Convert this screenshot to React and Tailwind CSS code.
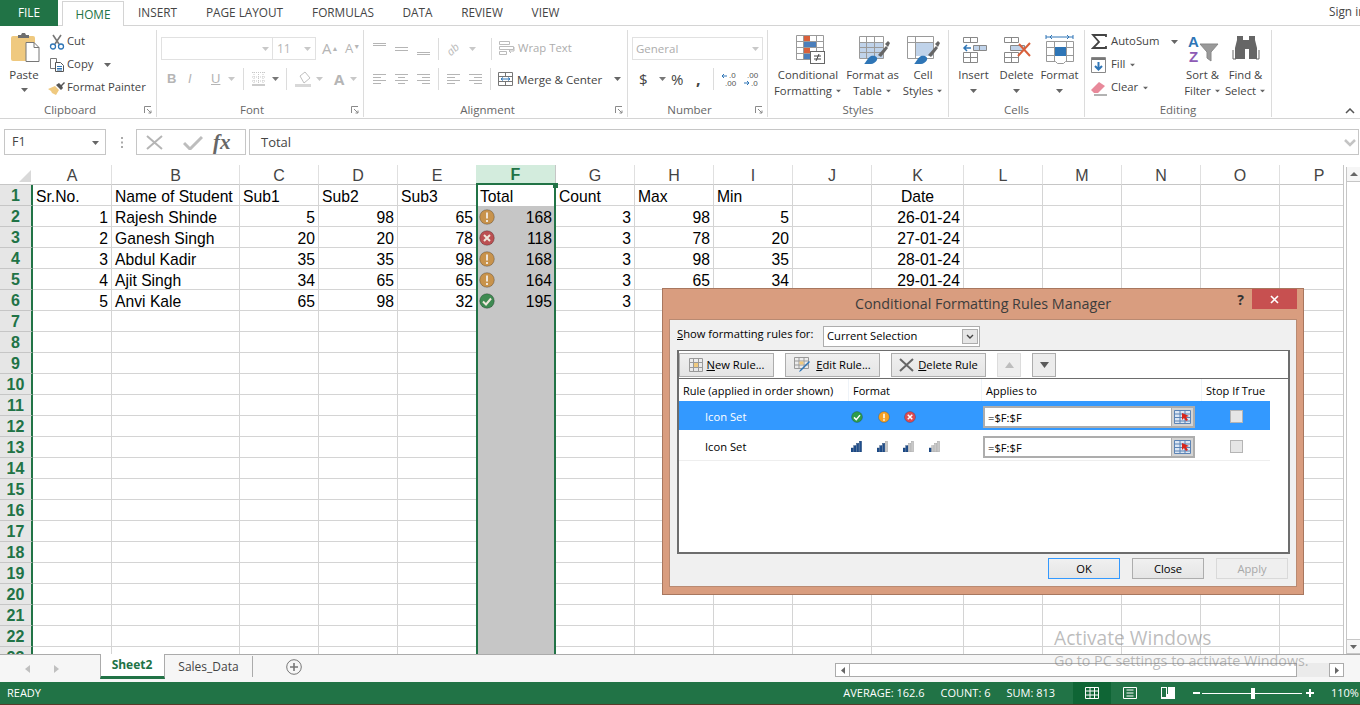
import React from 'react';

const UI = { fontFamily: '"Open Sans", "Noto Sans", sans-serif' };
const GRID = { fontFamily: '"Liberation Sans", Arial, sans-serif' };

const tabs = [
	['INSERT', 'w-[67px]'],
	['PAGE LAYOUT', 'w-[107px]'],
	['FORMULAS', 'w-[90px]'],
	['DATA', 'w-[59px]'],
	['REVIEW', 'w-[70px]'],
	['VIEW', 'w-[57px]'],
];

const columns = ['A', 'B', 'C', 'D', 'E', 'F', 'G', 'H', 'I', 'J', 'K', 'L', 'M', 'N', 'O', 'P'];

// the dialog sits on top of the last row's Max, Min and Date
const students = [
	[1, 'Rajesh Shinde', 5, 98, 65, 168, 'warn', 3, 98, 5, '26-01-24'],
	[2, 'Ganesh Singh', 20, 20, 78, 118, 'bad', 3, 78, 20, '27-01-24'],
	[3, 'Abdul Kadir', 35, 35, 98, 168, 'warn', 3, 98, 35, '28-01-24'],
	[4, 'Ajit Singh', 34, 65, 65, 164, 'warn', 3, 65, 34, '29-01-24'],
	[5, 'Anvi Kale', 65, 98, 32, 195, 'good', 3, '', '', ''],
];

const rowNumbers = Array.from({ length: 23 }, (_, i) => i + 1);

// small drop arrow used all over the ribbon
const Caret = ({ color = '#666', className = '' }) => (
	<svg width="7" height="4" viewBox="0 0 7 4" className={'shrink-0 ' + className}>
		<path d="M0 0h7L3.5 4z" fill={color} />
	</svg>
);

const Launcher = () => (
	<svg width="8" height="8" viewBox="0 0 8 8" className="shrink-0">
		<path d="M.5 7V.5H7M3 3l4 4M7 4.5V7H4.5" fill="none" stroke="#8a8a8a" strokeWidth="1" />
	</svg>
);

const PasteIcon = () => (
	<svg width="30" height="30" viewBox="0 0 30 30">
		<rect x="0" y="3" width="24" height="25" rx="2" fill="#efc97f" />
		<path d="M7 4V2h3l1-2h3l1 2h3v3H7z" fill="#6e6e6e" />
		<path d="M15.500 11.500h8l5 5v14h-13z" fill="#fff" stroke="#777" transform="translate(-0.500 -2)" />
		<path d="M23 9.500v5h5" fill="none" stroke="#777" />
	</svg>
);

const CutIcon = () => (
	<svg width="16" height="16" viewBox="0 0 16 16" fill="none">
		<path d="M4 1l6 9M12 1L6 10" stroke="#777" strokeWidth="1.600" />
		<circle cx="4" cy="12.500" r="2.500" stroke="#2e75b6" strokeWidth="1.300" />
		<circle cx="12" cy="12.500" r="2.500" stroke="#2e75b6" strokeWidth="1.300" />
	</svg>
);

const CopyIcon = () => (
	<svg width="16" height="16" viewBox="0 0 16 16" fill="none">
		<path d="M1.500 1.500h6v10h-6z" fill="#fff" stroke="#777" />
		<path d="M6.500 5.500h5l3 3v6h-8z" fill="#fff" stroke="#555" />
		<path d="M8 9.500h5M8 11.500h5M8 13h5" stroke="#2e75b6" />
	</svg>
);

const PainterIcon = () => (
	<svg width="17" height="16" viewBox="0 0 17 16">
		<path d="M0 9l7-3 4 4-3 5-2-1-2-1-1-2z" fill="#efc97f" />
		<path d="M8 5l3-2 2 2 3-3 1 1-3 3 1 2-2 2z" fill="#555" />
	</svg>
);

const BigIcon = ({ children, w = 34 }) => (
	<svg width={w} height="30" viewBox={`0 0 ${w} 30`} fill="none" className="shrink-0">
		{children}
	</svg>
);

const CondIcon = () => (
	<BigIcon>
		<path d="M5.500 1.500h27v24h-27zM5.500 7.500h27M5.500 13.500h27M5.500 19.500h27M12.500 1.500v24M18.500 1.500v24M25.500 1.500v24" stroke="#9a9a9a" />
		<rect x="13" y="2" width="6" height="5" fill="#d9603b" />
		<rect x="13" y="8" width="12" height="5" fill="#4a7ebb" />
		<rect x="13" y="14" width="6" height="5" fill="#d9603b" />
		<rect x="13" y="20" width="6" height="5" fill="#4a7ebb" />
		<rect x="19.500" y="17.500" width="14" height="12" fill="#fff" stroke="#666" />
		<path d="M23 22h7M23 25h7M28 20l-3 7" stroke="#444" />
	</BigIcon>
);

const TableIcon = () => (
	<BigIcon>
		<path d="M3.500 2.500h24v22h-24z" fill="#fff" stroke="#9a9a9a" />
		<rect x="4" y="8" width="23" height="16" fill="#c0d3ea" />
		<path d="M3.500 8.500h24M3.500 13.500h24M3.500 18.500h24M10.500 2.500v22M18.500 2.500v22" stroke="#9a9a9a" />
		<path d="M22 21l8-9 2 2-7 9z" fill="#666" />
		<path d="M29 10l3-3 2 2-2 4z" fill="#666" />
		<path d="M8 30c2-1 3-6 7-8 4-1 7 1 6 4-1 2-4 4-6 4z" fill="#2e75b6" />
	</BigIcon>
);

const StylesIcon = () => (
	<BigIcon>
		<path d="M1.500 2.500h26v22h-26z" fill="#fff" stroke="#9a9a9a" />
		<path d="M1.500 8.500h26M9.500 2.500v22" stroke="#9a9a9a" />
		<rect x="10" y="9" width="17" height="13" fill="#c0d3ea" />
		<path d="M22 21l8-9 2 2-7 9z" fill="#666" />
		<path d="M29 10l3-3 2 2-2 4z" fill="#666" />
		<path d="M8 30c2-1 3-6 7-8 4-1 7 1 6 4-1 2-4 4-6 4z" fill="#2e75b6" />
	</BigIcon>
);

const InsertIcon = () => (
	<BigIcon w={30}>
		<path d="M4.500 3.500h14v5h-14zM11.500 3.500v5M4.500 18.500h14v10h-14zM4.500 23.500h14M11.500 18.500v10" stroke="#888" />
		<path d="M14.500 11.500h13v5h-13z" fill="#c0d3ea" stroke="#888" />
		<path d="M20.500 11.500v5" stroke="#888" />
		<path d="M12 14H5M8 11l-3 3 3 3" stroke="#2e75b6" strokeWidth="1.500" />
	</BigIcon>
);

const DeleteIcon = () => (
	<BigIcon w={32}>
		<path d="M3.500 3.500h14v5h-14zM10.500 3.500v5M3.500 18.500h14v10h-14zM3.500 23.500h14M10.500 18.500v10" stroke="#888" />
		<path d="M9.500 11.500h14v5h-14z" fill="#c0d3ea" stroke="#888" />
		<path d="M18 10l11 12M29 9L17 22" stroke="#d9603b" strokeWidth="2" />
	</BigIcon>
);

const FormatIcon = () => (
	<BigIcon w={30}>
		<path d="M1 3h27M1 1v4M28 1v4" stroke="#2e75b6" />
		<path d="M5 3l2-2M5 3l2 2M24 3l-2-2M24 3l-2 2" stroke="#2e75b6" />
		<path d="M1.500 7.500h27v20h-8l-2 2h-6l-2-2h-9z" stroke="#999" fill="#fff" />
		<path d="M1.500 13.500h27M1.500 21.500h27M9.500 7.500v20M21.500 7.500v20" stroke="#999" />
		<rect x="10" y="13" width="11" height="9" fill="#2e75b6" />
	</BigIcon>
);

const SumIcon = () => (
	<svg width="16" height="16" viewBox="0 0 16 16" fill="none">
		<path d="M15 3V1H2l6 7-6 6h13v-2" stroke="#444" strokeWidth="1.800" />
	</svg>
);

const FillIcon = () => (
	<svg width="15" height="16" viewBox="0 0 15 16" fill="none">
		<path d="M.500 .500h14v15H.500z" fill="#fff" stroke="#888" />
		<rect x="1" y="1" width="13" height="2" fill="#777" />
		<path d="M7.500 5v7M4 9l3.500 3.500L11 9" stroke="#2e75b6" strokeWidth="2" />
	</svg>
);

const ClearIcon = () => (
	<svg width="16" height="16" viewBox="0 0 16 16">
		<path d="M0 10l8-8 6 4-7 7H3z" fill="#e8899a" />
		<path d="M3 15h13" stroke="#666" fill="none" />
	</svg>
);

const SortIcon = () => (
	<BigIcon w={32}>
		<text x="1" y="13" fontSize="15" fontWeight="700" fill="#2e75b6" fontFamily="Liberation Sans">A</text>
		<text x="2" y="28" fontSize="15" fontWeight="700" fill="#8e5bb5" fontFamily="Liberation Sans">Z</text>
		<path d="M13 10h18l-7 8v9l-4-3v-6z" fill="#999" stroke="#888" />
	</BigIcon>
);

const FindIcon = () => (
	<BigIcon w={28}>
		<path d="M5 2h6v4h6V2h6v4l2 8v11h-8V15h-4v10H3V14l2-8z" fill="#666" />
		<path d="M1 16v9h3M27 16v9h-3" stroke="#666" />
	</BigIcon>
);

const SmallBtn = ({ icon, label, caret, gap = 'gap-[2px]' }) => (
	<div className={'flex items-center h-[23px] ' + gap}>
		<span className="w-[17px] flex justify-center shrink-0">{icon}</span>
		<span className="text-[11.3px] text-[#444] whitespace-nowrap">{label}</span>
		{caret}
	</div>
);

const BigBtn = ({ icon, lines, width }) => (
	<div className={'flex flex-col items-center shrink-0 ' + width}>
		<div className="h-[37px] flex items-center justify-center">{icon}</div>
		<div className="text-[11.3px] leading-[16px] text-[#444] text-center whitespace-nowrap">
			<div>{lines[0]}</div>
			{lines[1] ? (
				<div className="flex items-center justify-center gap-[3px]">
					{lines[1]}
					<Caret className="scale-75" />
				</div>
			) : (
				<div className="flex justify-center pt-[6px]">
					<Caret />
				</div>
			)}
		</div>
	</div>
);

const Group = ({ width, label, launcher, children, className = '' }) => (
	<div className={'flex flex-col shrink-0 h-[87px] mt-[4px] border-r border-[#dcdcdc] ' + width}>
		<div className={'flex-1 flex min-h-0 ' + className}>{children}</div>
		<div className={'h-[15px] flex items-center relative justify-center text-[11.5px] text-[#666] ' + (launcher ? 'pr-[16px]' : '')}>
			{label}
			{launcher && (
				<span className="absolute right-[4px] top-[4px]">
					<Launcher />
				</span>
			)}
		</div>
	</div>
);

const Lines = ({ rows }) => (
	<svg width="15" height="14" viewBox="0 0 15 14" fill="none" className="shrink-0">
		{rows.map((r, i) => (
			<path key={i} d={`M${r[0]} ${r[1]}.500H${r[2]}`} stroke="#b5b5b5" />
		))}
	</svg>
);

const top = [[1, 1, 14], [1, 3, 14]];
const mid = [[1, 5, 14], [1, 8, 14]];
const bot = [[1, 10, 14], [1, 12, 14]];
const left = [[1, 2, 14], [1, 5, 9], [1, 8, 14], [1, 11, 9]];
const center = [[1, 2, 14], [4, 5, 11], [1, 8, 14], [4, 11, 11]];
const right = [[1, 2, 14], [6, 5, 14], [1, 8, 14], [6, 11, 14]];

const Divider = ({ className = '' }) => <span className={'w-px h-[22px] bg-[#dcdcdc] shrink-0 ' + className} />;

const Ribbon = () => (
	<div className="h-[93px] flex border-b border-[#d4d4d4] shrink-0 bg-white relative">
		<Group width="w-[157px]" label="Clipboard" launcher>
			<div className="w-[48px] flex flex-col items-center shrink-0">
				<div className="h-[33px] flex items-end pl-[3px]">
					<PasteIcon />
				</div>
				<span className="text-[11.5px] leading-[16px] text-[#444] mt-[4px]">Paste</span>
				<Caret className="mt-[5px]" />
			</div>
			<div className="flex flex-col">
				<SmallBtn icon={<CutIcon />} label="Cut" />
				<SmallBtn icon={<CopyIcon />} label="Copy" caret={<Caret className="ml-[9px]" />} />
				<SmallBtn icon={<PainterIcon />} label="Format Painter" />
			</div>
		</Group>

		<Group width="w-[207px]" label="Font" launcher className="flex-col pl-[4px] pt-[7px]">
			<div className="flex items-center h-[23px]">
				<div className="w-[112px] h-[23px] border border-[#e1e1e1] flex items-center justify-end pr-[3px]">
					<Caret color="#c8c8c8" />
				</div>
				<div className="w-[43px] h-[23px] border border-[#e1e1e1] border-l-0 flex items-center justify-between px-[4px] text-[12px] text-[#b5b5b5]">
					11
					<Caret color="#c8c8c8" />
				</div>
				<span className="ml-[6px] text-[15px] text-[#b5b5b5] w-[23px]">A<sup className="text-[7px]">▲</sup></span>
				<span className="text-[13px] text-[#b5b5b5]">A<sup className="text-[7px]">▼</sup></span>
			</div>
			<div className="flex items-center h-[22px] mt-[8px] pl-[6px] text-[#b5b5b5] text-[13px]">
				<span className="font-bold w-[21px]" style={GRID}>B</span>
				<span className="italic w-[23px]" style={GRID}>I</span>
				<span className="underline w-[17px]" style={GRID}>U</span>
				<Caret color="#c8c8c8" />
				<Divider className="ml-[8px]" />
				<svg width="15" height="14" viewBox="0 0 15 14" fill="none" className="ml-[7px]">
					<path d="M1 .500h13M1 5h13M1 9h13M3 0v12M7.500 0v12M12 0v12" stroke="#c8c8c8" strokeDasharray="1 1" />
					<path d="M1 13h13" stroke="#999" />
				</svg>
				<Caret className="ml-[6px]" color="#777" />
				<Divider className="ml-[7px]" />
				<svg width="16" height="16" viewBox="0 0 16 16" className="ml-[8px]">
					<path d="M5 5l5-4 5 6-6 5z" fill="none" stroke="#c0c0c0" />
					<rect y="13" width="16" height="3" fill="#d8d8d8" />
				</svg>
				<Caret className="ml-[5px]" color="#c8c8c8" />
				<span className="ml-[11px] text-[15px] font-bold">A</span>
				<Caret className="ml-[6px]" color="#c8c8c8" />
			</div>
		</Group>

		<Group width="w-[264px]" label="Alignment" launcher className="flex-col pl-[8px] pt-[7px]">
			<div className="flex items-center h-[23px] gap-[7px]">
				<Lines rows={top} />
				<Lines rows={mid} />
				<Lines rows={bot} />
				<Divider />
				<span className="text-[11px] text-[#bbb] -rotate-45 w-[16px] italic">ab</span>
				<Caret color="#c8c8c8" />
				<Divider className="ml-[8px]" />
				<span className="flex items-center gap-[3px] text-[11.3px] text-[#adadad] whitespace-nowrap">
					<svg width="16" height="15" viewBox="0 0 16 15" fill="none">
						<path d="M.500 .500h10v3H.500zM.500 5.500h14v3H.500zM.500 10.500h7v3H.500z" stroke="#bbb" />
						<path d="M15 6v4h-5M12 8l-2 2 2 2" stroke="#bbb" />
					</svg>
					Wrap Text
				</span>
			</div>
			<div className="flex items-center h-[22px] mt-[8px] gap-[7px]">
				<Lines rows={left} />
				<Lines rows={center} />
				<Lines rows={right} />
				<Divider />
				<Lines rows={left} />
				<Lines rows={right} />
				<Divider />
				<span className="flex items-center gap-[4px] pt-[1px] text-[11.6px] text-[#444] whitespace-nowrap">
					<svg width="15" height="14" viewBox="0 0 15 14" fill="none">
						<path d="M.500 .500h14v13H.500zM.500 4.500h14M.500 9.500h14M7.500 .500v4M7.500 9.500v4" stroke="#777" />
						<path d="M3 7h9M3 7l2-1.500M3 7l2 1.500M12 7l-2-1.500M12 7l-2 1.500" stroke="#2e75b6" />
					</svg>
					Merge &amp; Center
				</span>
				<Caret className="ml-[5px]" />
			</div>
		</Group>

		<Group width="w-[140px]" label="Number" launcher className="flex-col pl-[4px] pt-[7px]">
			<div className="w-[131px] h-[23px] border border-[#e1e1e1] flex items-center justify-between px-[3px] text-[11.5px] text-[#adadad]">
				General
				<Caret color="#c8c8c8" />
			</div>
			<div className="flex items-center h-[22px] mt-[8px] pl-[7px] text-[#444]">
				<span className="text-[15px] w-[17px]">$</span>
				<Caret color="#777" className="ml-[3px] mr-[5px]" />
				<span className="text-[15px] w-[21px]">%</span>
				<span className="text-[16px] font-bold ml-[4px] w-[10px] leading-[14px]">,</span>
				<Divider className="ml-[7px]" />
				<svg width="16" height="15" viewBox="0 0 16 15" className="ml-[7px]" fontFamily="Liberation Sans" fontSize="8">
					<path d="M1 4h5M3 2L1 4l2 2" fill="none" stroke="#2e75b6" />
					<text x="8" y="6" fill="#555">.0</text>
					<text x="4" y="14" fill="#555">.00</text>
				</svg>
				<svg width="16" height="15" viewBox="0 0 16 15" className="ml-[6px]" fontFamily="Liberation Sans" fontSize="8">
					<text x="4" y="6" fill="#555">.00</text>
					<path d="M1 11h5M4 9l2 2-2 2" fill="none" stroke="#2e75b6" />
					<text x="8" y="14" fill="#555">.0</text>
				</svg>
			</div>
		</Group>

		<Group width="w-[181px]" label="Styles" className="pl-[4px]">
			<BigBtn width="w-[72px]" icon={<CondIcon />} lines={['Conditional', 'Formatting']} />
			<BigBtn width="w-[57px]" icon={<TableIcon />} lines={['Format as', 'Table']} />
			<BigBtn width="w-[44px]" icon={<StylesIcon />} lines={['Cell', 'Styles']} />
		</Group>

		<Group width="w-[136px]" label="Cells" className="pl-[3px]">
			<BigBtn width="w-[43px]" icon={<InsertIcon />} lines={['Insert']} />
			<BigBtn width="w-[43px]" icon={<DeleteIcon />} lines={['Delete']} />
			<BigBtn width="w-[43px]" icon={<FormatIcon />} lines={['Format']} />
		</Group>

		<Group width="w-[187px]" label="Editing" className="pl-[5px]">
			<div className="w-[91px] shrink-0 flex flex-col">
				<SmallBtn icon={<SumIcon />} label="AutoSum" gap="gap-[4px]" caret={<Caret className="ml-[8px]" />} />
				<SmallBtn icon={<FillIcon />} label="Fill" gap="gap-[4px]" caret={<Caret className="scale-75" />} />
				<SmallBtn icon={<ClearIcon />} label="Clear" gap="gap-[4px]" caret={<Caret className="scale-75" />} />
			</div>
			<BigBtn width="w-[43px]" icon={<SortIcon />} lines={['Sort &', 'Filter']} />
			<BigBtn width="w-[43px]" icon={<FindIcon />} lines={['Find &', 'Select']} />
		</Group>

		<div className="flex-1 flex justify-end items-end pr-[5px] pb-[4px]">
			<svg width="10" height="6" viewBox="0 0 10 6" fill="none">
				<path d="M1 5l4-4 4 4" stroke="#555" strokeWidth="1.500" />
			</svg>
		</div>
	</div>
);

const FormulaBar = () => (
	<div className="h-[26px] mt-[10px] flex shrink-0 pl-[4px] pr-[1px]">
		<div className="w-[102px] border border-[#c6c6c6] flex items-center justify-between pl-[7px] pr-[6px] pt-[1px] text-[12.5px] text-[#444]">
			F1
			<Caret />
		</div>
		<div className="w-[30px] flex items-center justify-center">
			<svg width="3" height="11" viewBox="0 0 3 11">
				<path d="M1 0h2v2H1zM1 4.500h2v2H1zM1 9h2v2H1z" fill="#aaa" />
			</svg>
		</div>
		<div className="w-[110px] border border-[#c6c6c6] flex items-center pl-[9px]">
			<svg width="17" height="15" viewBox="0 0 17 15" fill="none">
				<path d="M1 1l15 13M16 1L1 14" stroke="#b5b5b5" strokeWidth="2" />
			</svg>
			<svg width="20" height="15" viewBox="0 0 20 15" fill="none" className="ml-[20px]">
				<path d="M1 8l6 6L19 2" stroke="#bdbdbd" strokeWidth="3" />
			</svg>
			<span className="ml-[10px] text-[21px] leading-none italic font-bold text-[#666]" style={{ fontFamily: '"Liberation Serif", serif' }}>fx</span>
		</div>
		<div className="flex-1 ml-[3px] border border-[#c6c6c6] flex items-center justify-between pl-[11px] pr-[2px] pt-[1px] text-[13px] text-[#444]">
			Total
			<svg width="12" height="8" viewBox="0 0 12 8" fill="none">
				<path d="M1 1l5 5 5-5" stroke="#c4c4c4" strokeWidth="2.500" />
			</svg>
		</div>
	</div>
);

const Dot = ({ kind, size = 16, muted }) => {
	const fill = {
		good: muted ? '#3f8a52' : '#2f9c4c',
		warn: muted ? '#c8934c' : '#f4a127',
		bad: muted ? '#bb5052' : '#dd4b52',
	}[kind];
	const mark = muted ? '#efe6da' : '#fff';
	return (
		<svg width={size} height={size} viewBox="0 0 16 16" fill="none" className="shrink-0">
			<circle cx="8" cy="8" r="7.300" fill={fill} stroke="#00000040" />
			{kind == 'good' && <path d="M4 8.500l3 3 5-6" stroke={mark} strokeWidth="2" />}
			{kind == 'warn' && <path d="M8 3.500v6M8 11v2" stroke={mark} strokeWidth="2" />}
			{kind == 'bad' && <path d="M5 5l6 6M11 5l-6 6" stroke={mark} strokeWidth="2" />}
		</svg>
	);
};

const Cell = ({ children, align = 'text-left' }) => (
	<div className={'border-r border-b border-[#d4d4d4] px-[3px] pt-[2px] text-[15.7px] leading-[20px] text-black whitespace-nowrap overflow-hidden ' + align}>
		{children}
	</div>
);

const rowValues = (n) => {
	if (n == 1) return ['Sr.No.', 'Name of Student', 'Sub1', 'Sub2', 'Sub3', null, 'Count', 'Max', 'Min', '', 'Date'];
	const s = students[n - 2];
	if (!s) return [];
	return [s[0], s[1], s[2], s[3], s[4], null, s[7], s[8], s[9], '', s[10]];
};

const SheetRow = ({ n }) => {
	const values = rowValues(n);
	const student = students[n - 2];
	return (
		<>
			<div className="bg-[#e6e6e6] border-r-2 border-r-[#217346] border-b border-b-[#c6c6c6] pt-[2px] flex items-center justify-center text-[16px] font-bold text-[#217346]">
				{n}
			</div>
			{columns.map((col, i) => {
				if (col == 'F') {
					return (
						<div
							key={col}
							className={
								'ml-[-1px] border-x-2 border-[#217346] text-[15.7px] leading-[20px] text-black relative flex items-center justify-between pl-[1px] pr-[2px] ' +
								(n == 1 ? 'bg-white pl-[2px] pt-[3px]' : 'bg-[#c6c6c6] border-b-0')
							}
						>
							{n == 1 && 'Total'}
							{student && <Dot kind={student[6]} muted />}
							{student && <span className="pt-[3px]">{student[5]}</span>}
							{n == 1 && <span className="absolute z-10 right-[-4px] top-[-2px] w-[5px] h-[5px] bg-[#217346]" />}
						</div>
					);
				}
				const v = values[i];
				const isNum = typeof v == 'number' || (col == 'K' && n > 1);
				const align = isNum ? 'text-right' : col == 'K' ? 'text-center' : 'text-left';
				return (
					<Cell key={col} align={align}>
						{v}
					</Cell>
				);
			})}
		</>
	);
};

const Sheet = () => (
	<div className="flex-1 min-h-0 flex mt-[10px] overflow-hidden" style={GRID}>
		<div className="w-[1344px] shrink-0 border-r border-[#c6c6c6] overflow-hidden">
			<div className="grid grid-cols-[33px_79px_128px_79px_79px_79px_79px_79px_79px_79px_79px_92px_79px_79px_79px_79px_79px] grid-rows-[20px_repeat(23,21px)] w-[1359px]">
				<div className="border-b border-[#c6c6c6] relative overflow-hidden">
					<span className="absolute right-[2px] bottom-[2px] w-0 h-0 border-l-[12px] border-l-transparent border-b-[12px] border-b-[#d9d9d9]" />
				</div>
				{columns.map((col) =>
					col == 'F' ? (
						<div key={col} className="ml-[-1px] pt-[2px] bg-[#d3ecdd] border-r border-[#c6c6c6] border-b-2 border-b-[#217346] flex items-center justify-center text-[16px] font-bold text-[#217346]">
							{col}
						</div>
					) : (
						<div key={col} className="pt-[2px] border-r border-[#e0e0e0] border-b border-b-[#c6c6c6] flex items-center justify-center text-[16px] text-[#444]">
							{col}
						</div>
					)
				)}
				{rowNumbers.map((n) => (
					<SheetRow key={n} n={n} />
				))}
			</div>
		</div>
		<div className="flex-1 ml-[2px] mt-[2px] border-l border-[#c6c6c6] flex flex-col bg-[#f6f6f6]">
			<div className="h-[15px] border-b border-[#c6c6c6] flex items-center justify-center">
				<svg width="8" height="4" viewBox="0 0 8 4"><path d="M0 4h8L4 0z" fill="#666" /></svg>
			</div>
			<div className="flex-1 bg-white" />
			<div className="h-[15px] border-y border-[#c6c6c6] flex items-center justify-center">
				<Caret />
			</div>
		</div>
	</div>
);

const TabBar = () => (
	<div className="h-[28px] flex shrink-0 bg-[#f6f6f6] border-t border-[#ababab]" style={UI}>
		<div className="w-[100px] flex items-center pl-[25px] gap-[24px] shrink-0">
			<svg width="5" height="8" viewBox="0 0 5 8"><path d="M5 0v8L0 4z" fill="#c0c0c0" /></svg>
			<svg width="5" height="8" viewBox="0 0 5 8"><path d="M0 0v8l5-4z" fill="#c0c0c0" /></svg>
		</div>
		<div className="w-[65px] h-[25px] bg-white border-x border-[#ababab] border-b-[3px] border-b-[#217346] mt-[-1px] flex items-center justify-center text-[12px] font-bold text-[#217346] pr-[1px]">
			Sheet2
		</div>
		<div className="w-[88px] h-[21px] mt-[1px] border-r border-[#ababab] flex items-center justify-center text-[12px] text-[#444]">
			Sales_Data
		</div>
		<div className="w-[82px] flex items-center justify-center pb-[4px]">
			<svg width="16" height="16" viewBox="0 0 16 16" fill="none">
				<circle cx="8" cy="8" r="7.300" stroke="#777" />
				<path d="M4 8h8M8 4v8" stroke="#777" strokeWidth="1.600" />
			</svg>
		</div>
		<div className="w-[500px] shrink-0" />
		<div className="flex-1 flex items-start pt-[8px]">
			<div className="w-[15px] h-[14px] border border-[#ababab] bg-white flex items-center justify-center shrink-0">
				<svg width="4" height="7" viewBox="0 0 4 7"><path d="M4 0v7L0 3.500z" fill="#666" /></svg>
			</div>
			<div className="w-[447px] h-[14px] border-y border-r border-[#ababab] bg-white shrink-0" />
			<div className="w-[32px] h-[14px] bg-[#ebebeb] shrink-0" />
			<div className="w-[15px] h-[14px] border border-[#ababab] bg-white flex items-center justify-center shrink-0">
				<svg width="4" height="7" viewBox="0 0 4 7"><path d="M0 0v7l4-3.500z" fill="#666" /></svg>
			</div>
		</div>
	</div>
);

const StatusBar = () => (
	<div className="h-[23px] shrink-0 bg-[#217346] border-b border-[#5a3a2a] flex items-center text-[11px] text-white" style={UI}>
		<span className="pl-[7px]">READY</span>
		<span className="ml-auto whitespace-nowrap">AVERAGE: 162.6</span>
		<span className="ml-[16px] whitespace-nowrap">COUNT: 6</span>
		<span className="ml-[16px] whitespace-nowrap">SUM: 813</span>
		<span className="ml-[18px] w-[38px] h-[22px] bg-[#0f6535] flex items-center justify-center">
			<svg width="14" height="12" viewBox="0 0 14 12" fill="none"><path d="M.500 .500h13v11H.500zM.500 4h13M.500 8h13M5 .500v11M9.500 .500v11" stroke="#fff" /></svg>
		</span>
		<span className="w-[38px] flex justify-center">
			<svg width="14" height="12" viewBox="0 0 14 12" fill="none"><path d="M.500 .500h13v11H.500zM3.500 3h7M3.500 6h7M3.500 9h7" stroke="#fff" /></svg>
		</span>
		<span className="w-[38px] flex justify-center">
			<svg width="14" height="12" viewBox="0 0 14 12"><path d="M0 0h14v12H0z" fill="#fff" /><path d="M6 0h1v7H6zM1 1h4v9H1z" fill="#217346" /></svg>
		</span>
		<span className="ml-[6px] w-[7px] h-[2px] bg-white" />
		<span className="ml-[2px] w-[100px] h-px bg-white relative">
			<span className="absolute left-[49px] top-[-5px] w-[4px] h-[11px] bg-white" />
		</span>
		<svg width="8" height="8" viewBox="0 0 8 8" className="ml-[4px]"><path d="M3 0h2v3h3v2H5v3H3V5H0V3h3z" fill="#fff" /></svg>
		<span className="ml-[17px] pr-[3px] w-[29px] text-right">110%</span>
	</div>
);

const DlgButton = ({ children, width = 'w-[95px]', icon }) => (
	<div className={'h-[24px] border border-[#adadad] bg-gradient-to-b from-[#f0f0f0] to-[#e5e5e5] flex items-center justify-center gap-[4px] text-[11.2px] text-black shrink-0 ' + width}>
		{icon}
		<span className="pt-[2px]">{children}</span>
	</div>
);

const RefPicker = () => (
	<div className="w-[22px] h-full bg-[#d4d4d4] border-l border-[#adadad] flex items-center justify-center shrink-0">
		<svg width="17" height="14" viewBox="0 0 17 14" fill="none">
			<path d="M.500 .500h16v13H.500z" fill="#dbe6f4" stroke="#5b83b5" />
			<path d="M.500 4h16M.500 7.500h16M.500 11h16M6 .500v13M11 .500v13" stroke="#5b83b5" />
			<path d="M8 3l7 3-3 1 2 3-2 1-2-3-2 2z" fill="#d8261c" />
		</svg>
	</div>
);

const Bars = ({ on }) => (
	<svg width="11" height="11" viewBox="0 0 11 11" className="shrink-0">
		{[0, 1, 2, 3].map((i) => (
			<rect key={i} x={i * 2.800} y={7 - i * 2.300} width="2.200" height={4 + i * 2.300} fill={i < on ? '#1f4e8c' : '#c9c9c9'} stroke={i < on ? '#163a6b' : '#9a9a9a'} strokeWidth=".4" />
		))}
	</svg>
);

const RuleRow = ({ selected, gap, children }) => (
	<div
		className={
			'w-[591px] flex items-center text-[11.2px] ' +
			(selected ? 'h-[29px] pt-[2px] bg-[#3399ff] text-white' : 'h-[31px] pt-[3px] text-black border-b border-[#eeeeee]')
		}
	>
		<span className="w-[170px] pl-[26px] pt-[2px] shrink-0">Icon Set</span>
		<div className={'w-[134px] flex pl-[2px] shrink-0 ' + gap}>{children}</div>
		<div className="w-[212px] h-[22px] bg-white border-2 border-[#adadad] flex shrink-0 text-black">
			<span className="flex-1 pl-[3px] leading-[19px]">=$F:$F</span>
			<RefPicker />
		</div>
		<div className="flex-1 flex justify-center pl-[8px]">
			<span className="w-[13px] h-[13px] bg-[#e6e6e6] border border-[#b5b5b5]" />
		</div>
	</div>
);

const RulesDialog = () => (
	<div className="absolute left-[662px] top-[288px] w-[642px] h-[307px] bg-[#d99d7f] border border-[#a8775f] flex flex-col px-[6px] pb-[7px]" style={UI}>
		<div className="h-[30px] relative flex items-center justify-center text-[14.3px] text-[#3c3c3c] shrink-0">
			Conditional Formatting Rules Manager
			<span className="absolute right-[53px] top-[0px] text-[14px] font-bold text-[#333]">?</span>
			<span className="absolute right-0 top-0 w-[45px] h-[20px] bg-[#c75050] flex items-center justify-center">
				<svg width="9" height="9" viewBox="0 0 9 9" fill="none"><path d="M1 1l7 7M8 1L1 8" stroke="#fff" strokeWidth="1.600" /></svg>
			</span>
		</div>
		<div className="flex-1 bg-[#f0f0f0] border border-[#b98a72] flex flex-col pl-[7px] pr-[6px] min-h-0">
			<div className="h-[30px] pt-[2px] flex items-center text-[11.2px] text-black shrink-0">
				<span className="w-[146px] whitespace-nowrap mt-[-3px]"><u>S</u>how formatting rules for:</span>
				<div className="w-[157px] h-[21px] bg-white border border-[#adadad] flex items-center justify-between pl-[3px] pr-[1px]">
					Current Selection
					<span className="w-[16px] h-[15px] bg-[#e6e6e6] border border-[#adadad] flex items-center justify-center">
						<svg width="8" height="5" viewBox="0 0 8 5" fill="none"><path d="M1 1l3 3 3-3" stroke="#444" strokeWidth="1.400" /></svg>
					</span>
				</div>
			</div>
			<div className="h-[204px] bg-white border-2 border-[#6d6d6d] border-t-[1px] flex flex-col shrink-0">
				<div className="h-[28px] flex items-center gap-[11px] shrink-0 border-b border-[#6d6d6d]">
					<DlgButton
						icon={
							<svg width="14" height="14" viewBox="0 0 14 14" fill="none">
								<path d="M.500 .500h13v13H.500zM.500 4.500h13M.500 9.500h13M4.500 .500v13M9.500 .500v13" stroke="#999" />
								<rect x="5" y="5" width="4" height="4" fill="#efc97f" />
							</svg>
						}
					>
						<u>N</u>ew Rule...
					</DlgButton>
					<DlgButton
						icon={
							<svg width="18" height="16" viewBox="0 0 18 16" fill="none">
								<path d="M.500 .500h14v11H.500zM.500 4h14M.500 8h14M5 .500v11M10 .500v11" stroke="#999" />
								<rect x="5.500" y="4.500" width="4" height="3" fill="#efc97f" />
								<path d="M16 5l-9 9-2 1 1-2 9-9z" fill="#2e75b6" />
							</svg>
						}
					>
						<u>E</u>dit Rule...
					</DlgButton>
					<DlgButton
						icon={
							<svg width="15" height="14" viewBox="0 0 15 14" fill="none">
								<path d="M1 1l13 12M14 1L1 13" stroke="#666" strokeWidth="2" />
							</svg>
						}
					>
						<u>D</u>elete Rule
					</DlgButton>
					<div className="w-[24px] h-[24px] border border-[#dcdcdc] bg-[#eeeeee] flex items-center justify-center shrink-0">
						<svg width="9" height="6" viewBox="0 0 9 6"><path d="M0 6h9L4.500 0z" fill="#bdbdbd" /></svg>
					</div>
					<div className="w-[24px] h-[24px] border border-[#adadad] bg-[#ececec] flex items-center justify-center shrink-0">
						<svg width="9" height="6" viewBox="0 0 9 6"><path d="M0 0h9L4.500 6z" fill="#5a5a5a" /></svg>
					</div>
				</div>
				<div>
					<div className="w-[591px] h-[22px] flex items-center text-[11px] text-black">
						<span className="w-[170px] pl-[4px] border-r border-[#eef3f8] whitespace-nowrap shrink-0 h-full leading-[23px]">Rule (applied in order shown)</span>
						<span className="w-[133px] pl-[4px] border-r border-[#eef3f8] shrink-0 h-full leading-[23px]">Format</span>
						<span className="w-[220px] pl-[4px] border-r border-[#eef3f8] shrink-0 h-full leading-[23px]">Applies to</span>
						<span className="flex-1 pl-[4px] whitespace-nowrap h-full leading-[23px]">Stop If True</span>
					</div>
					<RuleRow selected gap="gap-[14.5px]">
						<Dot kind="good" size={12} />
						<Dot kind="warn" size={12} />
						<Dot kind="bad" size={12} />
					</RuleRow>
					<RuleRow gap="gap-[15px]">
						<Bars on={4} />
						<Bars on={3} />
						<Bars on={2} />
						<Bars on={1} />
					</RuleRow>
				</div>
			</div>
			<div className="flex-1 flex items-center justify-end gap-[12px] pr-[2px] pb-[4px]">
				<div className="w-[72px] h-[21px] pt-[2px] border border-[#3399ff] bg-gradient-to-b from-[#f0f0f0] to-[#e5e5e5] flex items-center justify-center text-[11.2px]">OK</div>
				<div className="w-[72px] h-[21px] pt-[2px] border border-[#adadad] bg-gradient-to-b from-[#f0f0f0] to-[#e5e5e5] flex items-center justify-center text-[11.2px]">Close</div>
				<div className="w-[72px] h-[21px] pt-[2px] border border-[#d9d9d9] bg-[#efefef] flex items-center justify-center text-[11.2px] text-[#a8a8a8]">Apply</div>
			</div>
		</div>
	</div>
);

export default function App() {
	return (
		<div className="relative w-[1360px] h-[705px] overflow-hidden bg-white flex flex-col" style={UI}>
			<div className="h-[26px] flex shrink-0 text-[11.8px] text-[#444] border-b border-[#d4d4d4]">
				<div className="w-[58px] h-[26px] bg-[#217346] text-white flex items-center justify-center">FILE</div>
				<div className="w-[62px] h-[26px] ml-[4px] mt-[1px] bg-white border border-b-0 border-[#d4d4d4] text-[#217346] flex items-center justify-center">HOME</div>
				{tabs.map(([name, w]) => (
					<div key={name} className={'flex items-center justify-center whitespace-nowrap ' + w}>
						{name}
					</div>
				))}
				<div className="ml-auto w-[31px] whitespace-nowrap overflow-hidden leading-[22px]">Sign in</div>
			</div>
			<Ribbon />
			<FormulaBar />
			<Sheet />
			<TabBar />
			<StatusBar />
			<RulesDialog />
			<div className="absolute left-[1054px] top-[624px] pointer-events-none text-[#7a7a7a]/50 whitespace-nowrap">
				<div className="text-[19.2px] leading-[27px]">Activate Windows</div>
				<div className="text-[14.3px] leading-[20px]">Go to PC settings to activate Windows.</div>
			</div>
		</div>
	);
}
